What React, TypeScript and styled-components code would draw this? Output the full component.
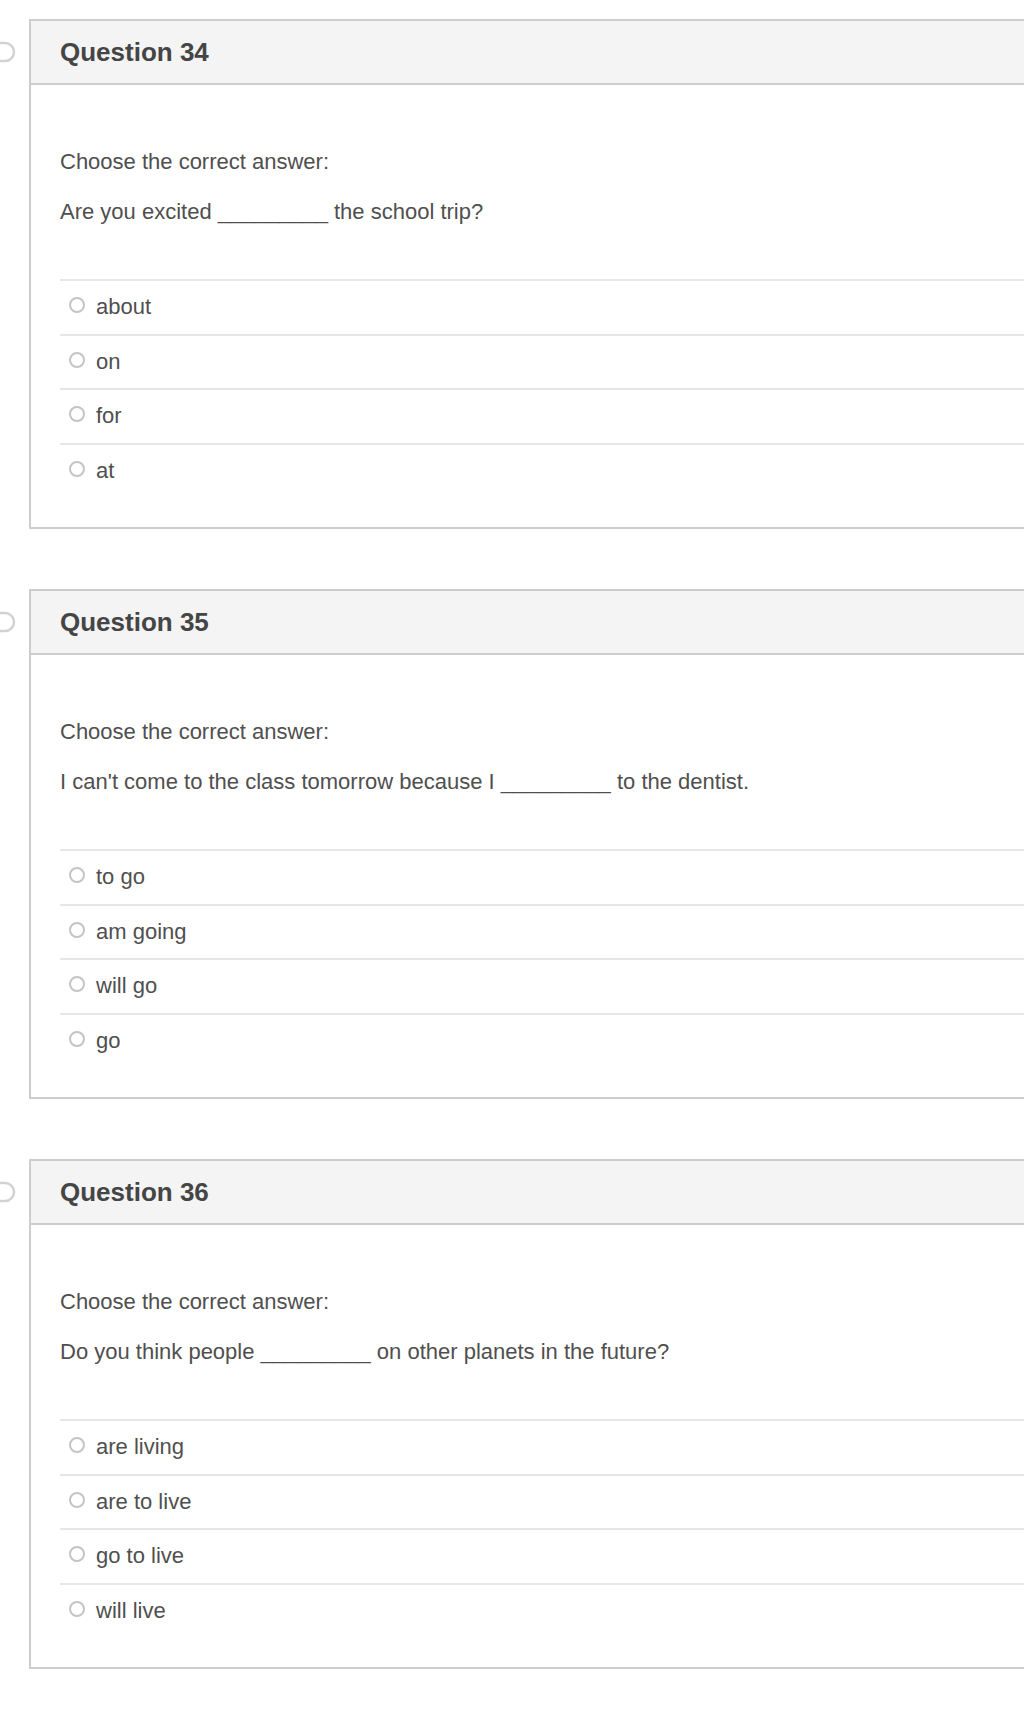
import React from "react";
import styled, { createGlobalStyle } from "styled-components";

const GlobalStyle = createGlobalStyle`
  html, body {
    margin: 0;
    padding: 0;
    background: #ffffff;
    overflow-x: hidden;
  }
  body {
    font-family: "Liberation Sans", Arial, sans-serif;
  }
`;

const Page = styled.div`
  display: flex;
  flex-direction: column;
  gap: 60px;
  padding-top: 19px;
  width: 1024px;
`;

const QuestionRow = styled.section`
  display: flex;
  align-items: flex-start;
`;

const MarkerColumn = styled.div`
  flex: 0 0 29px;
  padding-top: 22px;
  display: flex;
`;

const Card = styled.div`
  flex: 0 0 1010px;
  border: 2px solid #cdcdcd;
  border-right: none;
  background: #ffffff;
`;

const Header = styled.div`
  height: 62px;
  background: #f4f4f4;
  border-bottom: 2px solid #cdcdcd;
  display: flex;
  align-items: center;
  padding-left: 29px;
`;

const Title = styled.h2`
  margin: 0;
  font-size: 26px;
  font-weight: 700;
  color: #454545;
`;

const Body = styled.div`
  padding: 64px 0 30px 29px;
`;

const Prompt = styled.p`
  margin: 0;
  font-size: 22px;
  line-height: 26px;
  color: #4f4f4f;
`;

const Sentence = styled(Prompt)`
  margin-top: 24px;
`;

const Options = styled.ul`
  list-style: none;
  margin: 54px 0 0 0;
  padding: 0;
`;

const Option = styled.li`
  height: 52.5px;
  border-top: 2px solid #e6e6e6;
  display: flex;
  align-items: center;
  padding-left: 9px;
  gap: 11px;
  font-size: 22px;
  color: #4f4f4f;
`;

const Radio = styled.span`
  width: 12px;
  height: 12px;
  border-radius: 50%;
  border: 2px solid #c4c4c4;
  background: #ffffff;
  flex: 0 0 auto;
  margin-top: -4px;
`;

const Marker = () => (
  <svg width="18" height="22" viewBox="0 0 18 22" aria-hidden="true">
    <rect x="-14" y="2" width="28" height="18" rx="9" fill="none" stroke="#d2d2d2" strokeWidth="2.5" />
  </svg>
);

type Q = { n: number; sentence: string; options: string[] };

const questions: Q[] = [
  {
    n: 34,
    sentence: "Are you excited _________ the school trip?",
    options: ["about", "on", "for", "at"],
  },
  {
    n: 35,
    sentence: "I can't come to the class tomorrow because I _________ to the dentist.",
    options: ["to go", "am going", "will go", "go"],
  },
  {
    n: 36,
    sentence: "Do you think people _________ on other planets in the future?",
    options: ["are living", "are to live", "go to live", "will live"],
  },
];

export default function App() {
  return (
    <>
      <GlobalStyle />
      <Page>
        {questions.map((q) => (
          <QuestionRow key={q.n}>
            <MarkerColumn>
              <Marker />
            </MarkerColumn>
            <Card>
              <Header>
                <Title>Question {q.n}</Title>
              </Header>
              <Body>
                <Prompt>Choose the correct answer:</Prompt>
                <Sentence>{q.sentence}</Sentence>
                <Options>
                  {q.options.map((o) => (
                    <Option key={o}>
                      <Radio />
                      <span>{o}</span>
                    </Option>
                  ))}
                </Options>
              </Body>
            </Card>
          </QuestionRow>
        ))}
      </Page>
    </>
  );
}
